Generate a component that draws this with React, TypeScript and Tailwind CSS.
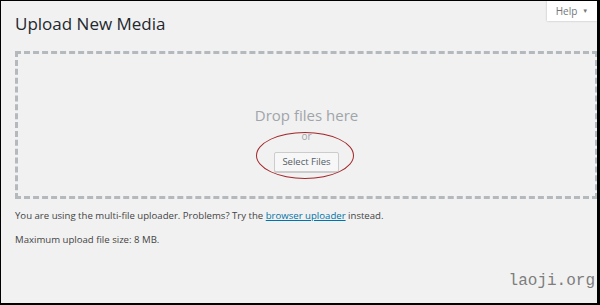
import { useState } from "react"

function HelpTab() {
  return (
    <div className="absolute right-0 top-0 flex h-[20px] w-[50px] items-center justify-center gap-[5px] bg-white text-[10px] text-[#72777c] shadow-[0_0_2px_rgba(0,0,0,0.25)]">
      <span>Help</span>
      <span className="text-[6px] leading-none">▼</span>
    </div>
  )
}

function DropZone() {
  const [hover, setHover] = useState(false)

  return (
    <div className="mt-[14px] flex h-[148px] w-[583px] flex-col items-center border-[3px] border-dashed border-[#b4b9be] pt-[51px]">
      <p className="text-[15px] leading-[20px] text-[#a0a5aa]">Drop files here</p>
      <p className="mt-[5px] text-[10px] leading-[12px] text-[#a0a5aa]">or</p>
      <div className="relative mt-[5px]">
        <button
          onMouseEnter={() => setHover(true)}
          onMouseLeave={() => setHover(false)}
          className={`h-[20px] rounded-[2px] border border-[#cccccc] px-[7px] text-[9.5px] text-[#555d66] shadow-[0_1px_0_#cccccc] ${hover ? "bg-[#fafafa]" : "bg-[#f7f7f7]"}`}
        >
          Select Files
        </button>
        <div className="pointer-events-none absolute left-[-18px] top-[-15px] h-[47px] w-[98px] rounded-[50%] border-[1.5px] border-[#a3262a]" />
      </div>
    </div>
  )
}

export default function App() {
  return (
    <div
      className="relative h-[305px] w-[600px] overflow-hidden border-b-2 border-l border-r-[3px] border-t border-black bg-[#f1f1f1] pl-[14px] pt-[10px] text-[#444444]"
      style={{ fontFamily: '"Open Sans", "Liberation Sans", sans-serif' }}
    >
      <HelpTab />
      <h1 className="text-[17px] leading-[26px] text-[#23282d]">Upload New Media</h1>
      <DropZone />
      <p className="mt-[10px] text-[9.6px] leading-[14px]">
        You are using the multi-file uploader. Problems? Try the{" "}
        <a href="#" className="text-[#0073aa] underline">browser uploader</a> instead.
      </p>
      <p className="mt-[10px] text-[9.6px] leading-[14px]">Maximum upload file size: 8 MB.</p>
      <span
        className="absolute bottom-[10px] right-[2px] text-[16px] text-[#7d7d7d]"
        style={{ fontFamily: '"Liberation Mono", "Courier New", monospace' }}
      >
        laoji.org
      </span>
    </div>
  )
}
